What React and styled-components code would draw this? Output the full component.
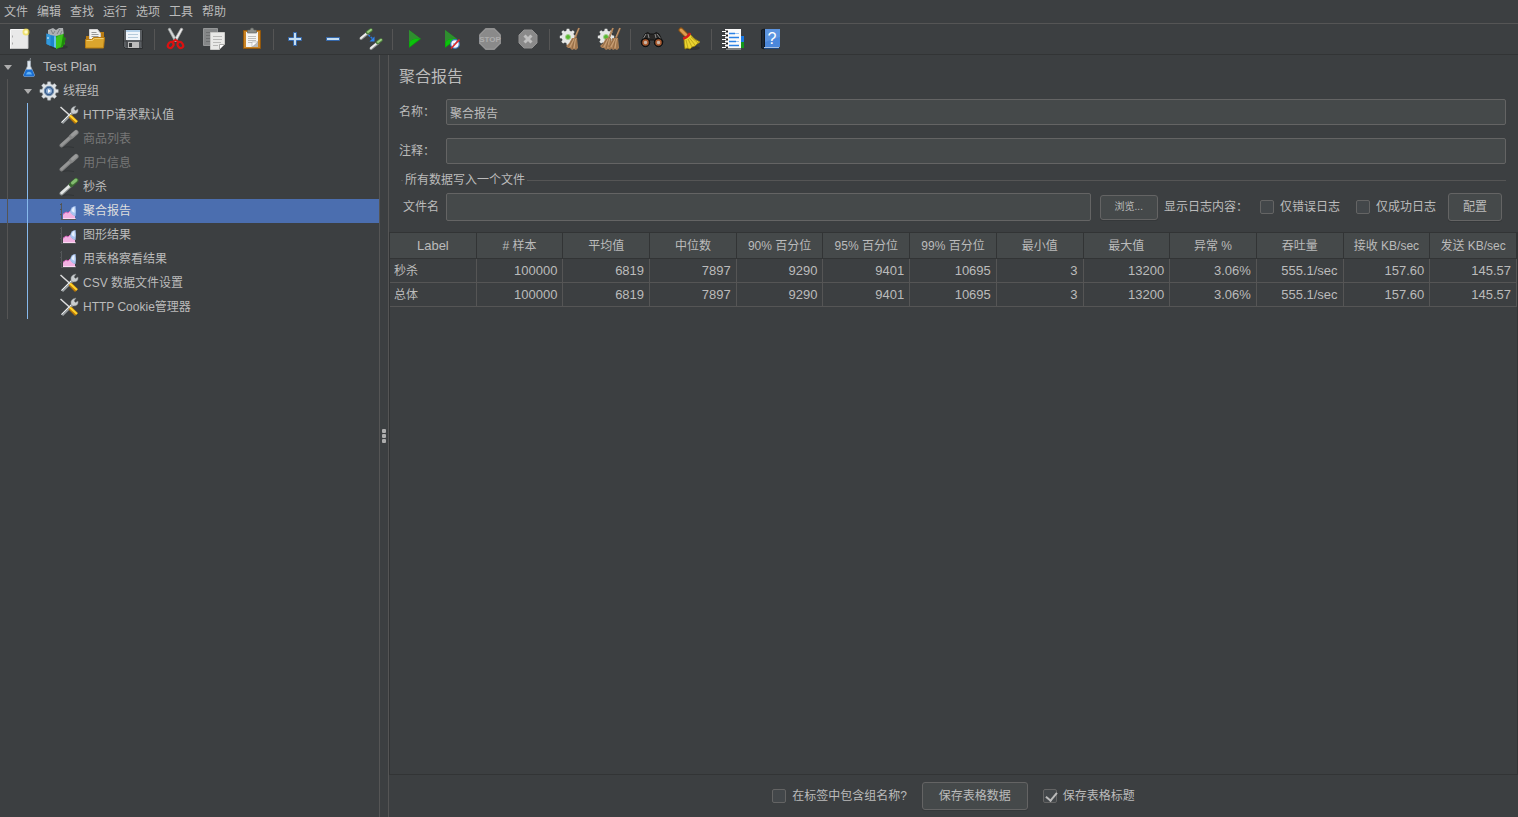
import React, { useState } from 'react'
import styled, { createGlobalStyle, css, ThemeProvider } from 'styled-components'

const theme = {
  colors: {
    background: '#3c3f41',
    field: '#45494a',
    border: '#646464',
    line: '#555555',
    dark: '#323435',
    text: '#bbbbbb',
    disabled: '#777777',
    selection: '#4b6eaf',
    guide: '#87b9ec'
  }
}

const menus = ['文件', '编辑', '查找', '运行', '选项', '工具', '帮助']

const columns = [
  'Label', '# 样本', '平均值', '中位数', '90% 百分位', '95% 百分位', '99% 百分位',
  '最小值', '最大值', '异常 %', '吞吐量', '接收 KB/sec', '发送 KB/sec'
]

const rows = [
  ['秒杀', '100000', '6819', '7897', '9290', '9401', '10695', '3', '13200', '3.06%', '555.1/sec', '157.60', '145.57'],
  ['总体', '100000', '6819', '7897', '9290', '9401', '10695', '3', '13200', '3.06%', '555.1/sec', '157.60', '145.57']
]

/* toolbar drawings, all on a 24x24 grid */

const GEAR = 'M10.3 1h3.4l.5 2.8 2 .8 2.3-1.6 2.4 2.4-1.6 2.3.8 2 2.8.5v3.4l-2.8.5-.8 2 1.6 2.3-2.4 2.4-2.3-1.6-2 .8-.5 2.8h-3.4l-.5-2.8-2-.8-2.3 1.6-2.4-2.4 1.6-2.3-.8-2-2.8-.5v-3.4l2.8-.5.8-2-1.6-2.3 2.4-2.4 2.3 1.6 2-.8z'

const NewIcon = () => <>
  <path d="M3.500 2.500h17v19h-17z" fill="#e9e9e9" stroke="#f8f8f8"/>
  <path d="M4 21.500h17V7" fill="none" stroke="#c4c4c4"/>
  <path d="M5 9.500h1M5 16.500h1" stroke="#aaa" strokeWidth="2"/>
  <circle cx="19" cy="5" r="3.500" fill="#f0de4a" opacity=".75"/>
  <circle cx="19" cy="5" r="1.700" fill="#fffbd0"/>
</>

const TemplatesIcon = () => <>
  <ellipse cx="14" cy="20" rx="9" ry="2" fill="#2b2d2e" opacity=".6"/>
  <path d="M3 7l0-4 5-2 3 2 3-2 4 0 1 8-7 3-8-2z" fill="#aeb1b3"/>
  <path d="M6 3l2 4M10 4l-2 3M15 2l-3 5M17 4l-2 4" stroke="#7f8385" fill="none"/>
  <path d="M1.500 6.500l4 1.500 5 1v12l-9-4z" fill="#1c83cc"/>
  <path d="M1.500 6.500l4 1.500v11l-4-2z" fill="#3299dc"/>
  <path d="M3 10v2" stroke="#e8f6ff"/>
  <path d="M9 9l3 1v11.500l-3-1.500z" fill="#63bfe8"/>
  <path d="M11 9l8-2-1 13-7 2z" fill="#2ba80f"/>
  <path d="M11 11q4-4 7-3l2 9-9 5z" fill="#3cc41b"/>
  <path d="M18 8l1-2v4l2 1-2 7-3 2z" fill="#1e8b0b"/>
</>

const OpenIcon = () => <>
  <path d="M3 9h5v11H3zM16 5h5v14h-5z" fill="#b97b12"/>
  <path d="M6.500 2.500h8l3 4v8h-11z" fill="#f1f1f1" stroke="#d0d0d0"/>
  <path d="M8.500 5.500h5M8.500 7.500h7M8.500 9.500h7" stroke="#999"/>
  <path d="M2.500 12.500h6l2-2h11l-1 10.500h-18z" fill="#dba52d" stroke="#b87c11"/>
  <path d="M3.500 13.500h6l2-2h9" fill="none" stroke="#f2cd6e"/>
</>

const SaveIcon = () => <>
  <path d="M2.500 3.500l1-1h17l1 1v18h-17l-2-2z" fill="#5a5e62" stroke="#2c2e30"/>
  <path d="M5 3h14v10H5z" fill="#f0f5fa"/>
  <path d="M5 3h14v2H5z" fill="#b6d2ea"/>
  <path d="M7 7.500h10M7 10.500h10" stroke="#b5cadb"/>
  <path d="M7 15h11v6H7z" fill="#bdbdbd"/>
  <path d="M8 16h3v4H8z" fill="#36393b"/>
  <path d="M3 14h3v6M19 14h2v6" stroke="#3a3d3f" fill="none"/>
</>

const CutIcon = () => <>
  <path d="M4 2l2-1 7 12-2 2z" fill="#d3d6d6" stroke="#9c9f9f" strokeWidth=".7"/>
  <path d="M19 2l-2-1-7 12 2 2z" fill="#ececec" stroke="#aaa" strokeWidth=".7"/>
  <circle cx="11.500" cy="12" r="1" fill="#666"/>
  <ellipse cx="6.700" cy="18" rx="2.600" ry="3.200" transform="rotate(35 6.700 18)" fill="none" stroke="#dc1111" strokeWidth="2.200"/>
  <ellipse cx="16.300" cy="18" rx="2.600" ry="3.200" transform="rotate(-35 16.300 18)" fill="none" stroke="#dc1111" strokeWidth="2.200"/>
  <path d="M8 15l3.500-2 3.500 2" fill="none" stroke="#dc1111" strokeWidth="2"/>
</>

const CopyIcon = () => <>
  <path d="M1.500 1.500h14v17h-14z" fill="#858788" stroke="#959798"/>
  <path d="M4 5.500h9M4 8.500h9M4 11.500h5M4 14.500h5" stroke="#6e7071"/>
  <path d="M8.500 5.500h14v12l-5 5h-9z" fill="#e9e9e7" stroke="#c9c9c7"/>
  <path d="M11 9.500h9M11 12.500h9M11 15.500h8M11 18.500h5" stroke="#b9b9b7"/>
  <path d="M17.500 22.500v-5h5z" fill="#fff" stroke="#a9a9a7"/>
</>

const PasteIcon = () => <>
  <path d="M3.500 3.500h17v18h-17z" fill="#c98324" stroke="#91570d"/>
  <path d="M6 5h12v15H6z" fill="#f4f4f2"/>
  <path d="M7.500 5V3h2.500l1-2h2l1 2h2.500v3h-9z" fill="#8b8e8a" stroke="#5d605c" strokeWidth=".6"/>
  <path d="M8 9.500h8M8 11.500h8M8 13.500h8M8 15.500h4" stroke="#bdbdbb"/>
  <path d="M12 20l6-6v6z" fill="#b9b9b7"/>
  <path d="M12 20v-5h6z" fill="#fff" stroke="#999" strokeWidth=".5"/>
</>

const PlusIcon = () => <path
  d="M10.500 5.500h3v5h5v3h-5v5h-3v-5h-5v-3h5z" fill="#c5def2" stroke="#3467aa"/>

const MinusIcon = () => <path d="M5.500 10.500h13v3h-13z" fill="#c5def2" stroke="#3467aa"/>

const Dropper = () => <>
  <path d="M1 10.500L8 5" stroke="#8c8f8f" strokeWidth="3" strokeLinecap="round"/>
  <path d="M1 10L7 5" stroke="#ececec" strokeWidth="2" strokeLinecap="round"/>
  <path d="M7.500 4.500L11 2" stroke="#4c7d3d" strokeWidth="3.500" strokeLinecap="round"/>
  <path d="M8 4L11 1.800" stroke="#9dce83" strokeWidth="2" strokeLinecap="round"/>
</>

const ToggleIcon = () => <>
  <g transform="translate(1 1)"><Dropper/></g>
  <g transform="translate(11 11)"><Dropper/></g>
  <path d="M9.500 8l5 4.500" stroke="#2878df" strokeWidth="1.500" strokeDasharray="2 1"/>
  <path d="M15.500 9.500v5h-5z" fill="#2f83ef"/>
</>

const PlayIcon = () => <>
  <path d="M7 3l12 9-12 9z" fill="#0b990b"/>
  <path d="M7 3l12 9c-5-1-9 0-12 3z" fill="#2f8e2f"/>
  <path d="M7.500 15q4-4 10-3l-10 8z" fill="#0bc20b"/>
</>

const PlayNoTimersIcon = () => <>
  <g transform="translate(-2 0)"><PlayIcon/></g>
  <circle cx="15" cy="17" r="4.300" fill="#f3f7fd" stroke="#3d79bd" strokeWidth="1.200"/>
  <path d="M15 17l2-3M13 17h2" stroke="#5b8ec5"/>
  <path d="M11 21.500l8.500-9" stroke="#de2a2a" strokeWidth="1.700"/>
</>

const StopIcon = () => <>
  <path d="M7.500 1h9L23 7.500v9L16.500 23h-9L1 16.500v-9z" fill="#8a8a8a"/>
  <path d="M8 2h8l6 6v8l-6 6H8l-6-6V8z" fill="none" stroke="#969696"/>
  <text x="12" y="15" textAnchor="middle" fontFamily="Liberation Sans, sans-serif" fontSize="8" fontWeight="700" fill="#adadad">STOP</text>
</>

const ShutdownIcon = () => <>
  <path d="M8 3h8l5 5v8l-5 5H8l-5-5V8z" fill="#8a8a8a" stroke="#929292"/>
  <path d="M8.500 8.500l7 7M15.500 8.500l-7 7" stroke="#bfbfbf" strokeWidth="3"/>
</>

const Bristles = () => <>
  <path d="M16 11l4-10" stroke="#9a6e46" strokeWidth="2"/>
  <path d="M16 10l4-9" stroke="#cfa77f" strokeWidth=".7"/>
  <path d="M13 11l5 0 1 10-2 2-2-1-2 1-2-2-2 0-2-2q4-3 6-8z" fill="#b18358"/>
  <path d="M14 12l-5 8M15.500 12l-2.500 10M17 12l0 10" stroke="#8b6743" strokeWidth=".8"/>
  <path d="M15 12l-4 8M16.500 12l-1.500 9" stroke="#d3ad84" strokeWidth=".8"/>
</>

const SmallGear = () => <>
  <path d={GEAR} transform="translate(0 1) scale(.75)" fill="#e5e7e5"/>
  <circle cx="9" cy="10" r="2.500" fill="#57b82f" stroke="#a4cf8d"/>
</>

const ClearIcon = () => <>
  <SmallGear/>
  <Bristles/>
</>

const ClearAllIcon = () => <>
  <SmallGear/>
  <g transform="translate(-4 0)"><Bristles/></g>
  <g transform="translate(3 0)"><Bristles/></g>
</>

const SearchIcon = () => <>
  <path d="M5 7q3-3 5 0h4q2-3 5 0l4 8-5 2-4-4h-4l-4 4-5-2z" fill="#292827" stroke="#141414"/>
  <path d="M6 7l-3 5M8 7l1 4M17 7l4 5M15 7l1 4" stroke="#8c8c8c"/>
  <circle cx="5.500" cy="15.500" r="4.200" fill="#171717" stroke="#0d0d0d"/>
  <circle cx="18.500" cy="15.500" r="4.200" fill="#171717" stroke="#0d0d0d"/>
  <circle cx="5.500" cy="15.500" r="2.500" fill="#c9b5a6" stroke="#a8582d" strokeWidth="1.500"/>
  <circle cx="18.500" cy="15.500" r="2.500" fill="#c9b5a6" stroke="#a8582d" strokeWidth="1.500"/>
</>

const BroomIcon = () => <>
  <ellipse cx="14" cy="21" rx="8" ry="2" fill="#292b2c" opacity=".6"/>
  <path d="M3 3l5 5" stroke="#8a5315" strokeWidth="5" strokeLinecap="round"/>
  <path d="M3 3l5 5" stroke="#dc9c50" strokeWidth="3" strokeLinecap="round"/>
  <path d="M6 11q4-1 6-4 3 5 10 8l-3 2-2 2-3 1-2 2-3-1-2 1q-1-6-1-11z" fill="#ead32f" stroke="#9f880b" strokeWidth=".8"/>
  <path d="M8 13l2 8M10 12l4 8M11.500 11l5.500 7M13 10l7 6" stroke="#b39c14" strokeWidth=".8"/>
  <path d="M5 11.500q5-1 7-5.500" fill="none" stroke="#d51d1d" strokeWidth="2.500"/>
</>

const FunctionsIcon = () => <>
  <path d="M18 9h5v7h-5z" fill="#1978e3"/>
  <path d="M18 15h5v6h-5z" fill="#12961a"/>
  <path d="M4 2h16v19H4z" fill="#fafafa"/>
  <path d="M5 22h15" stroke="#bfc2c3"/>
  <path d="M3 4.500h4M3 8.500h4M3 12.500h4M3 16.500h4M3 20.500h4" stroke="#202020" strokeWidth="2"/>
  <path d="M1 4.500h4M1 8.500h4M1 12.500h4M1 16.500h4M1 20.500h4" stroke="#fff"/>
  <path d="M8 6.500h6M8 10.500h10M8 14.500h7M8 18.500h10" stroke="#2c82e5" strokeWidth="1.500"/>
  <path d="M14 6.500h4M15 14.500h3" stroke="#9dc7f6"/>
</>

const HelpIcon = () => <>
  <path d="M2.500 3l3-1v20l-3-1z" fill="#1d2733" stroke="#12181f"/>
  <path d="M6 2h15v18H6z" fill="#4a87db"/>
  <path d="M6 2h15v8L6 15z" fill="#5c94e0"/>
  <path d="M5 20.500h15" stroke="#a5bfe2"/>
  <path d="M5 21.500h15" stroke="#1c4882"/>
  <text x="13" y="17" textAnchor="middle" fontFamily="Liberation Sans, sans-serif" fontSize="16" fill="#fff">?</text>
</>

/* tree drawings, all on a 20x20 grid */

const FlaskIcon = () => <>
  <path d="M11.500 1l-1 5" stroke="#858b91"/>
  <path d="M8.500 4h3v5l4 9q0 1.500-1.500 1.500H6q-1.500 0-1.500-1.500l4-9z" fill="#dfe7ee" stroke="#a8b2bb" strokeWidth=".7"/>
  <path d="M7 12.500h6l2.500 5.500q0 1.500-1.500 1.500H6q-1.500 0-1.500-1.500z" fill="#1b6fd2"/>
  <path d="M8 15.500q2-1.500 4 0l1 2H7z" fill="#65b3f6"/>
</>

const ThreadGroupIcon = () => <>
  <path d={GEAR} transform="scale(.84)" fill="#dfe3e6" stroke="#a6abb0" strokeWidth=".6"/>
  <circle cx="10" cy="10" r="4.700" fill="#3b5d8c" stroke="#6f8eae" strokeWidth="1"/>
  <circle cx="10" cy="10" r="3" fill="#86a9d2"/>
  <path d="M9 8l3 2-3 2z" fill="#fff"/>
</>

const ConfigIcon = () => <>
  <path d="M3 18L14 7" stroke="#9ca1a4" strokeWidth="3"/>
  <path d="M2.500 17.500L14 6" stroke="#edf0f1"/>
  <path d="M12 7q-1-5 5-6l-2 3 1.500 1.500L19 4q1 5-5 5z" fill="#c9cdcf" stroke="#85898b" strokeWidth=".5"/>
  <path d="M1.500 2l10 9" stroke="#dedede" strokeWidth="1.500"/>
  <path d="M11 11l6.500 6.500" stroke="#ba7809" strokeWidth="4"/>
  <path d="M11 10.500l7 6.500" stroke="#ffd32b" strokeWidth="2"/>
</>

const SamplerIcon = ({ off }) => <>
  <path d="M3 18.500q6-1.500 12 0" fill="none" stroke="#2c2e30" opacity=".6"/>
  <path d="M2.500 16.500L12 8" stroke={off ? '#7d7e7e' : '#8c9190'} strokeWidth="4" strokeLinecap="round"/>
  <path d="M2.500 16L12 7.500" stroke={off ? '#959696' : '#e3e5e4'} strokeWidth="2.500" strokeLinecap="round"/>
  <path d="M12.500 7.500L17 3.500" stroke={off ? '#858686' : '#3d6b33'} strokeWidth="5" strokeLinecap="round"/>
  <path d="M13.500 6L17 3" stroke={off ? '#9a9b9b' : '#83bc70'} strokeWidth="3" strokeLinecap="round"/>
</>

const ReportIcon = () => <>
  <path d="M2.500 2v16M2 18.500h15" stroke="#55585a"/>
  <path d="M1 3.500h2M1 8.500h2M1 13.500h2" stroke="#505355"/>
  <path d="M4 18v-5l3-2 2 1 2-2 2 3 3 2v3z" fill="#f2b1e2"/>
  <path d="M4 13.500l3-2.500 2 1 2-2" fill="none" stroke="#d766bd"/>
  <path d="M11 11q1-6 5.500-6 1 5 0 10-3 0-5.500-4z" fill="#a9c4f0"/>
  <path d="M12.500 10q1-4 3-4v6z" fill="#e6f1ff"/>
  <path d="M4 17.500h12.500" stroke="#fbd9f3"/>
</>

const toolGroups = [
  [['新建', NewIcon], ['模板', TemplatesIcon], ['打开', OpenIcon], ['保存', SaveIcon]],
  [['剪切', CutIcon], ['复制', CopyIcon], ['粘贴', PasteIcon]],
  [['展开', PlusIcon], ['收起', MinusIcon], ['切换', ToggleIcon]],
  [['启动', PlayIcon], ['不停顿启动', PlayNoTimersIcon], ['停止', StopIcon, true], ['关闭', ShutdownIcon, true]],
  [['清除', ClearIcon], ['清除全部', ClearAllIcon]],
  [['搜索', SearchIcon], ['重置搜索', BroomIcon]],
  [['函数助手', FunctionsIcon], ['帮助', HelpIcon]]
]

const tree = [
  { title: 'Test Plan', icon: FlaskIcon, depth: 0, parent: true, latin: true },
  { title: '线程组', icon: ThreadGroupIcon, depth: 1, parent: true },
  { title: 'HTTP请求默认值', icon: ConfigIcon, depth: 2 },
  { title: '商品列表', icon: SamplerIcon, depth: 2, off: true },
  { title: '用户信息', icon: SamplerIcon, depth: 2, off: true },
  { title: '秒杀', icon: SamplerIcon, depth: 2 },
  { title: '聚合报告', icon: ReportIcon, depth: 2 },
  { title: '图形结果', icon: ReportIcon, depth: 2 },
  { title: '用表格察看结果', icon: ReportIcon, depth: 2 },
  { title: 'CSV 数据文件设置', icon: ConfigIcon, depth: 2 },
  { title: 'HTTP Cookie管理器', icon: ConfigIcon, depth: 2 }
]

const App = () => {
  return <ThemeProvider theme={theme}>
    <GlobalStyle/>
    <Window>
      <MenuBar>
        {menus.map(menu => <MenuItem key={menu}>{menu}</MenuItem>)}
      </MenuBar>
      <Toolbar/>
      <Workspace>
        <Tree/>
        <Splitter><Grip/><Grip/><Grip/></Splitter>
        <Report/>
      </Workspace>
    </Window>
  </ThemeProvider>
}

const Toolbar = () => {
  return <ToolbarWrapper>
    {toolGroups.map((group, index) => (
      <ToolGroup key={index}>
        {group.map(([title, Icon, disabled]) => (
          <ToolButton key={title} aria-label={title} disabled={disabled}>
            <svg width="24" height="24" viewBox="0 0 24 24"><Icon/></svg>
          </ToolButton>
        ))}
      </ToolGroup>
    ))}
  </ToolbarWrapper>
}

const Tree = () => {
  const [selected, setSelected] = useState(6)
  return <TreeWrapper>
    {tree.map(({ title, icon: Icon, depth, parent, off, latin }, index) => (
      <TreeRow
        key={title}
        $selected={index === selected}
        $off={off}
        $latin={latin}
        onClick={() => setSelected(index)}
      >
        {depth > 0 && <Guide/>}
        {depth > 1 && <Guide $active/>}
        <ArrowBox>{parent && <Arrow/>}</ArrowBox>
        <TreeIcon viewBox="0 0 20 20"><Icon off={off}/></TreeIcon>
        {title}
      </TreeRow>
    ))}
  </TreeWrapper>
}

const Report = () => {
  return <ReportWrapper>
    <Title>聚合报告</Title>
    <Form>
      <label htmlFor="name">名称：</label>
      <TextField id="name" defaultValue="聚合报告"/>
      <label htmlFor="comment">注释：</label>
      <TextField id="comment"/>
    </Form>
    <FileGroup>
      <legend>所有数据写入一个文件</legend>
      <FileRow>
        <FileLabel htmlFor="file">文件名</FileLabel>
        <TextField id="file" $tall/>
        <BrowseButton>浏览...</BrowseButton>
        <span>显示日志内容：</span>
        <LogOptions>
          <Check id="errors" label="仅错误日志"/>
          <Check id="successes" label="仅成功日志"/>
        </LogOptions>
        <Button>配置</Button>
      </FileRow>
    </FileGroup>
    <TablePane>
      <Table>
        <thead>
          <tr>{columns.map(column => <th key={column}>{column}</th>)}</tr>
        </thead>
        <tbody>
          {rows.map(row => (
            <tr key={row[0]}>{row.map((value, index) => <td key={index}>{value}</td>)}</tr>
          ))}
        </tbody>
      </Table>
    </TablePane>
    <Footer>
      <Check id="group" label="在标签中包含组名称?"/>
      <Button $wide>保存表格数据</Button>
      <Check id="header" label="保存表格标题" defaultChecked/>
    </Footer>
  </ReportWrapper>
}

const Check = ({ id, label, defaultChecked }) => {
  return <CheckWrapper>
    <CheckBox id={id} type="checkbox" defaultChecked={defaultChecked}/>
    <label htmlFor={id}>{label}</label>
  </CheckWrapper>
}

const GlobalStyle = createGlobalStyle`
  * {
    box-sizing: border-box;
  }
  body {
    margin: 0;
    background-color: ${({ theme }) => theme.colors.background};
    color: ${({ theme }) => theme.colors.text};
  }
  body, button, input {
    font: 12px/16px 'Liberation Sans', 'Noto Sans CJK SC', sans-serif;
  }
`

const Window = styled.div`
  display: flex;
  flex-direction: column;
  min-height: 100vh;
`

const MenuBar = styled.nav`
  display: flex;
  gap: 9px;
  height: 24px;
  padding-left: 4px;
  border-bottom: 1px solid ${({ theme }) => theme.colors.line};
`
const MenuItem = styled.button`
  padding: 0;
  border: 0;
  background: none;
  color: inherit;
`

const ToolbarWrapper = styled.div`
  display: flex;
  height: 31px;
  border-bottom: 1px solid ${({ theme }) => theme.colors.dark};
`
const ToolGroup = styled.div`
  display: flex;
  align-items: center;

  & + &::before {
    content: '';
    width: 1px;
    height: 21px;
    margin: 0 2px;
    background-color: ${({ theme }) => theme.colors.line};
  }
`
const ToolButton = styled.button`
  display: flex;
  align-items: center;
  justify-content: center;
  width: 38px;
  height: 30px;
  padding: 0;
  border: 0;
  background: none;
`

const Workspace = styled.div`
  flex: 1;
  display: grid;
  grid-template-columns: 379px 10px minmax(0, 1fr);
`

const TreeWrapper = styled.ul`
  margin: 0;
  padding: 0;
  list-style: none;
`
const TreeRow = styled.li`
  display: flex;
  align-items: center;
  height: 24px;
  font-size: ${({ $latin }) => $latin ? '13px' : '12px'};
  white-space: nowrap;
  cursor: default;
  color: ${({ theme, $off }) => $off ? theme.colors.disabled : theme.colors.text};

  ${({ $selected }) => $selected && css`
    background-color: ${({ theme }) => theme.colors.selection};
    color: #ddd;
  `};
`
const Guide = styled.span`
  align-self: stretch;
  width: 20px;
  padding-left: 7px;

  &::before {
    content: '';
    display: block;
    width: 1px;
    height: 100%;
    background-color: ${({ theme, $active }) => $active ? theme.colors.guide : theme.colors.line};
  }
`
const ArrowBox = styled.span`
  width: 19px;
  padding-left: 4px;
`
const Arrow = styled.span`
  display: block;
  border: 4px solid transparent;
  border-top: 5px solid #adadad;
  border-bottom: 0;
  width: 0;
`
const TreeIcon = styled.svg`
  width: 20px;
  height: 20px;
  margin-right: 4px;
`

const Splitter = styled.div`
  display: flex;
  flex-direction: column;
  align-items: center;
  justify-content: center;
  gap: 1px;
  border: 1px solid ${({ theme }) => theme.colors.line};
  border-width: 0 1px;
`
const Grip = styled.span`
  width: 4px;
  height: 4px;
  border-radius: 1px;
  background-color: #adadad;
`

const ReportWrapper = styled.main`
  display: flex;
  flex-direction: column;
`
const Title = styled.h1`
  margin: 10px 10px 11px;
  font-size: 16px;
  line-height: 23px;
  font-weight: 400;
`
const Form = styled.div`
  display: grid;
  grid-template-columns: 47px 1fr;
  row-gap: 13px;
  align-items: center;
  padding: 0 12px 8px 10px;
`
const TextField = styled.input`
  min-width: 0;
  height: ${({ $tall }) => $tall ? '28px' : '26px'};
  padding: 0 3px;
  border: 1px solid ${({ theme }) => theme.colors.border};
  border-radius: 2px;
  outline: 0;
  background-color: ${({ theme }) => theme.colors.field};
  color: inherit;
`
const FileGroup = styled.fieldset`
  min-width: 0;
  margin: 0 12px 11px;
  padding: 5px 4px 0 2px;
  border: 0;
  border-top: 1px solid ${({ theme }) => theme.colors.line};

  legend {
    padding: 0 2px;
  }
`
const FileRow = styled.div`
  display: flex;
  align-items: center;
  white-space: nowrap;

  ${TextField} {
    flex: 1;
  }
`
const FileLabel = styled.label`
  width: 43px;
`
const Button = styled.button`
  height: 28px;
  padding: 0 ${({ $wide }) => $wide ? '16px' : '14px'};
  border: 1px solid ${({ theme }) => theme.colors.border};
  border-radius: 3px;
  background-color: ${({ theme }) => theme.colors.field};
  box-shadow: 0 1px 0 #35383a;
  color: inherit;
`
const BrowseButton = styled(Button)`
  height: 25px;
  margin: 0 6px 0 9px;
  font-size: 10px;
`
const LogOptions = styled.div`
  display: flex;
  gap: 16px;
  margin: 0 12px;
`
const CheckWrapper = styled.span`
  display: flex;
  align-items: center;
  gap: 6px;
`
const CheckBox = styled.input`
  appearance: none;
  width: 14px;
  height: 14px;
  margin: 0;
  border: 1px solid ${({ theme }) => theme.colors.border};
  border-radius: 2px;
  background-color: #43474a;

  &:checked::after {
    content: '';
    display: block;
    width: 5px;
    height: 9px;
    margin-left: 4px;
    border: solid ${({ theme }) => theme.colors.text};
    border-width: 0 2px 2px 0;
    transform: rotate(40deg);
  }
`

const TablePane = styled.div`
  flex: 1;
  border: 1px solid ${({ theme }) => theme.colors.dark};
`
const Table = styled.table`
  width: 100%;
  table-layout: fixed;
  border-spacing: 0;
  white-space: nowrap;

  th {
    height: 26px;
    padding: 0;
    border: 1px solid ${({ theme }) => theme.colors.dark};
    border-width: 0 1px 1px 0;
    background-color: ${({ theme }) => theme.colors.field};
    font-weight: 400;
  }
  th:first-child {
    font-size: 13px;
  }
  td {
    height: 24px;
    padding: 0 5px;
    border: 1px solid ${({ theme }) => theme.colors.line};
    border-width: 0 1px 1px 0;
    font-size: 13px;
    text-align: right;
  }
  td:first-child {
    padding-left: 4px;
    font-size: 12px;
    text-align: left;
  }
`
const Footer = styled.footer`
  display: flex;
  align-items: center;
  justify-content: center;
  gap: 15px;
  padding: 7px 0;
`

export default App
